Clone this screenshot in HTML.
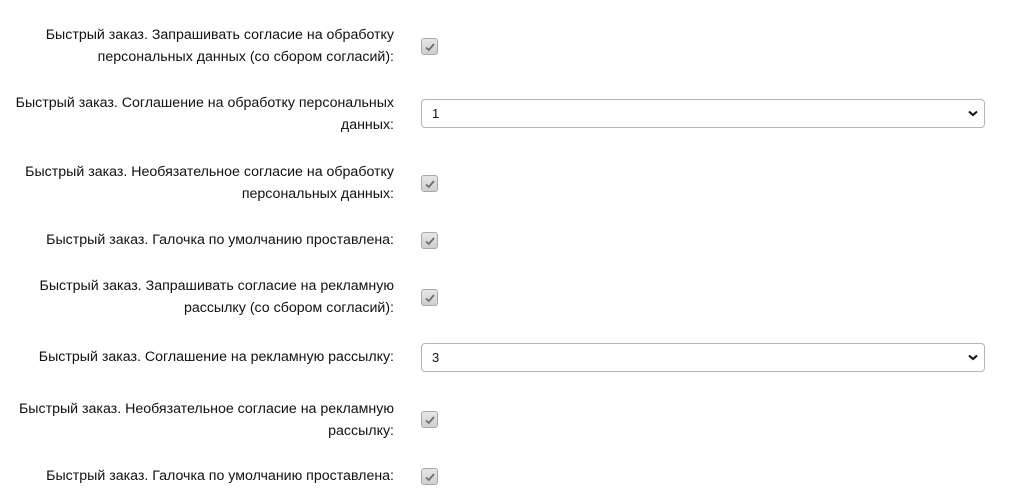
<!DOCTYPE html>
<html><head><meta charset="utf-8"><style>
body{margin:0;width:1016px;height:500px;background:#fff;font-family:"Liberation Sans",Arial,sans-serif;font-size:14.2px;color:#111;position:relative;overflow:hidden}
.l{position:absolute;right:622px;text-align:right;line-height:22px;width:420px}
.cb{position:absolute;left:421px;width:15px;height:15px;border:1px solid #a9a9a9;border-radius:3px;background:linear-gradient(#e6e6e6,#cfcfcf)}
.cb svg{position:absolute;left:1.5px;top:1.5px}
.sel{position:absolute;left:421px;width:562px;height:27px;border:1px solid #b5b5b5;border-radius:4px;background:#fff;font-size:13px}
.sel span{position:absolute;left:10px;top:6px}
.sel svg{position:absolute;right:6px;top:10px}
</style></head><body>
<div class="l" style="top:24px">Быстрый заказ. Запрашивать согласие на обработку<br>персональных данных (со сбором согласий):</div>
<div class="cb" style="top:38px"><svg width="12" height="12" viewBox="0 0 12 12"><path d="M2 6.5 L4.8 9 L10 3" stroke="#6e6e6e" stroke-width="1.8" fill="none"/></svg></div>

<div class="l" style="top:92px">Быстрый заказ. Соглашение на обработку персональных<br>данных:</div>
<div class="sel" style="top:99px"><span>1</span><svg width="10" height="7" viewBox="0 0 10 7"><path d="M1 1.5 L5 5 L9 1.5" stroke="#111" stroke-width="2" fill="none"/></svg></div>

<div class="l" style="top:161px">Быстрый заказ. Необязательное согласие на обработку<br>персональных данных:</div>
<div class="cb" style="top:175px"><svg width="12" height="12" viewBox="0 0 12 12"><path d="M2 6.5 L4.8 9 L10 3" stroke="#6e6e6e" stroke-width="1.8" fill="none"/></svg></div>

<div class="l" style="top:229px">Быстрый заказ. Галочка по умолчанию проставлена:</div>
<div class="cb" style="top:232px"><svg width="12" height="12" viewBox="0 0 12 12"><path d="M2 6.5 L4.8 9 L10 3" stroke="#6e6e6e" stroke-width="1.8" fill="none"/></svg></div>

<div class="l" style="top:275px">Быстрый заказ. Запрашивать согласие на рекламную<br>рассылку (со сбором согласий):</div>
<div class="cb" style="top:289px"><svg width="12" height="12" viewBox="0 0 12 12"><path d="M2 6.5 L4.8 9 L10 3" stroke="#6e6e6e" stroke-width="1.8" fill="none"/></svg></div>

<div class="l" style="top:346px">Быстрый заказ. Соглашение на рекламную рассылку:</div>
<div class="sel" style="top:343px"><span>3</span><svg width="10" height="7" viewBox="0 0 10 7"><path d="M1 1.5 L5 5 L9 1.5" stroke="#111" stroke-width="2" fill="none"/></svg></div>

<div class="l" style="top:398px">Быстрый заказ. Необязательное согласие на рекламную<br>рассылку:</div>
<div class="cb" style="top:411px"><svg width="12" height="12" viewBox="0 0 12 12"><path d="M2 6.5 L4.8 9 L10 3" stroke="#6e6e6e" stroke-width="1.8" fill="none"/></svg></div>

<div class="l" style="top:465px">Быстрый заказ. Галочка по умолчанию проставлена:</div>
<div class="cb" style="top:468px"><svg width="12" height="12" viewBox="0 0 12 12"><path d="M2 6.5 L4.8 9 L10 3" stroke="#6e6e6e" stroke-width="1.8" fill="none"/></svg></div>
</body></html>
